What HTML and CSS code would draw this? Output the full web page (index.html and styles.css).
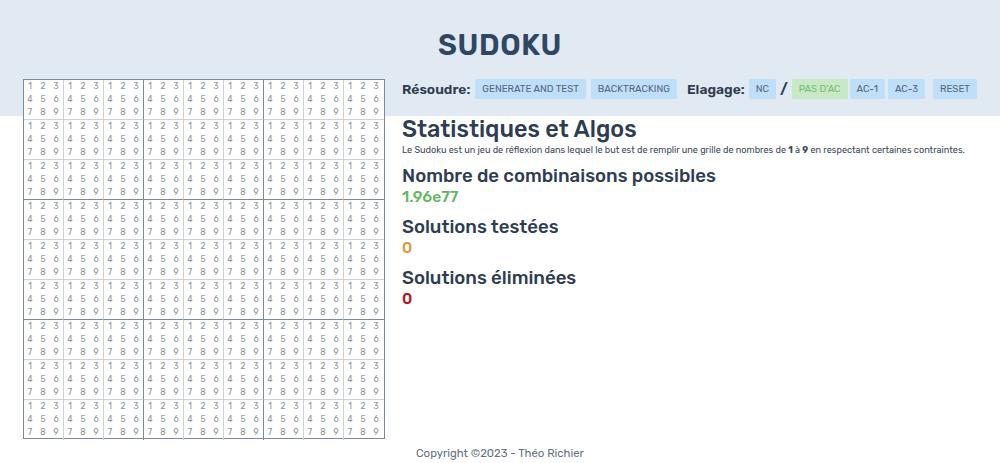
FILE: index.html
```html
<!DOCTYPE html>
<html lang="fr">
<head>
<meta charset="utf-8">
<title>Sudoku</title>
<link rel="stylesheet" href="styles.css">
</head>
<body>
<header class="banner"><h1 class="title">SUDOKU</h1></header>
<main class="layout">
  <div class="board" id="board"></div>
  <section class="panel">
    <div class="toolbar">
      <span class="label">Résoudre:</span>
      <button class="btn">GENERATE AND TEST</button>
      <button class="btn">BACKTRACKING</button>
      <span class="label label-prune">Elagage:</span>
      <button class="btn btn-nc">NC</button>
      <span class="label slash">/</span>
      <button class="btn btn-on">PAS D'AC</button>
      <button class="btn btn-tight">AC-1</button>
      <button class="btn">AC-3</button>
      <button class="btn btn-reset">RESET</button>
    </div>
    <h2 class="heading">Statistiques et Algos</h2>
    <p class="intro">Le Sudoku est un jeu de réflexion dans lequel le but est de remplir une grille de nombres de <b>1</b> à <b>9</b> en respectant certaines contraintes.</p>
    <h3 class="stat">Nombre de combinaisons possibles</h3>
    <div class="value green">1.96e77</div>
    <h3 class="stat">Solutions testées</h3>
    <div class="value orange">0</div>
    <h3 class="stat">Solutions éliminées</h3>
    <div class="value red">0</div>
  </section>
</main>
<footer class="footer">Copyright ©2023 - Théo Richier</footer>
<script src="app.js"></script>
</body>
</html>
```
FILE: styles.css
```css
* { box-sizing: border-box; }
html, body { margin: 0; height: 100%; overflow: hidden; }
body { background: #fff; color: #2e3d52; font-family: Rubik, Inter, "Noto Sans", sans-serif; }
.banner { height: 116px; background: #e1e9f3; padding-top: 28px; }
.title { margin: 0; text-align: center; font-size: 29px; line-height: 35px; font-weight: 600; letter-spacing: .6px; color: #2f4763; }
.layout { display: flex; align-items: flex-start; margin-top: -37px; padding-left: 23px; }
.board { width: 362px; height: 360px; flex: none; display: grid; grid-template-columns: repeat(9, 40px); grid-template-rows: repeat(9, 40px); background: #fff; border: 1px solid #7f8a99; }
.cell { display: grid; grid-template-columns: repeat(3, 10px); grid-template-rows: repeat(3, 12px); gap: 1px 3px; padding-left: 1px; border-right: 1px solid #cdd2d8; border-bottom: 1px solid #cdd2d8; font-size: 8.5px; color: #8d949d; text-align: center; align-items: center; }
.cell:nth-child(3n) { border-right-color: #7f8a99; }
.cell:nth-child(9n) { border-right: 0; }
.cell.row-end { border-bottom-color: #7f8a99; }
.cell.last-row { border-bottom: 0; }
.panel { margin-left: 17px; flex: 1; min-width: 0; }
.toolbar { display: flex; align-items: center; height: 20px; white-space: nowrap; }
.label { font-size: 13.8px; font-weight: 600; color: #2e3d52; margin-right: 5px; }
.label-prune { margin-left: 5px; margin-right: 4px; }
.slash { margin: 0 4px 0 0; font-size: 15px; }
.btn { height: 20px; margin: 0 5px 0 0; padding: 0 7px; border: 0; border-radius: 2px; background: #bfdef8; color: #53677f; font: 400 9.75px/20px Rubik, Inter, "Noto Sans", sans-serif; }
.btn-nc { margin-right: 4px; }
.btn-on { background: #c9e8c5; color: #78bc75; margin-right: 2px; }
.btn-tight { margin-right: 3px; }
.btn-reset { margin-left: 3px; margin-right: 0; }
.heading { margin: 16px 0 0; font-size: 23.4px; line-height: 29px; font-weight: 500; color: #2e3d52; }
.intro { margin: 0 0 10px; font-size: 9.15px; line-height: 11px; color: #3c4859; }
.stat { margin: 0; font-size: 18.6px; line-height: 22px; font-weight: 500; color: #2e3d52; }
.value { font-size: 15.7px; line-height: 20px; font-weight: 500; margin-bottom: 9px; }
.green { color: #5fb760; }
.orange { color: #e0993f; }
.red { color: #b3141f; }
.footer { margin-top: 7px; text-align: center; font-size: 11.35px; line-height: 14px; color: #66717f; }
```
FILE: app.js
```js
const board = document.getElementById('board');
for (let i = 0; i < 81; i++) {
  const cell = document.createElement('div');
  cell.className = 'cell';
  const row = Math.floor(i / 9);
  if (row % 3 === 2) cell.classList.add('row-end');
  if (row === 8) cell.classList.add('last-row');
  for (let n = 1; n <= 9; n++) {
    const s = document.createElement('span');
    s.textContent = n;
    cell.appendChild(s);
  }
  board.appendChild(cell);
}
```
